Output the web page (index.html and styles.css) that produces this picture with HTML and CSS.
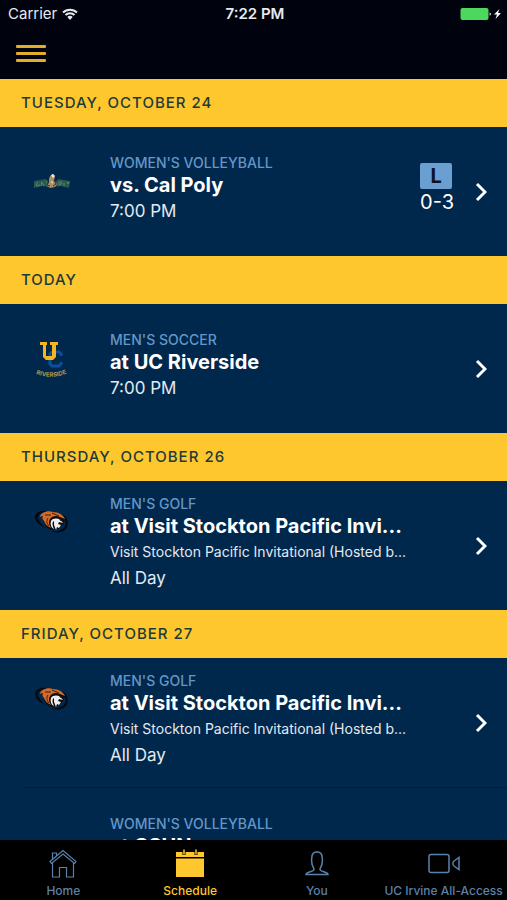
FILE: index.html
```html
<!DOCTYPE html>
<html lang="en">
<head>
<meta charset="utf-8">
<meta name="viewport" content="width=device-width, initial-scale=1">
<title>Schedule</title>
<link rel="stylesheet" href="styles.css">
</head>
<body>
<svg class="defs" aria-hidden="true">
  <symbol id="chevron" viewBox="0 0 12 20"><path d="M2 2l8 8-8 8" fill="none" stroke="#fff" stroke-width="3"/></symbol>
  <symbol id="tiger" viewBox="0 0 36 26">
    <path d="M14 2C6 1 1 4 1 8c0 5 6 9 12 12C8 16 4 12 4 8c0-3 4-5 10-6z" fill="#05080d"/>
    <path d="M28 5c5 3 7 8 5 13-2 5-9 7-16 4 7 1 12-1 14-5 2-4 0-8-3-12z" fill="#05080d"/>
    <path d="M8 6c3-3 7-4 11-3 6 0 10 3 12 8l-2 4-5 5-7 1C11 18 9 13 8 6z" fill="#0b0d10"/>
    <path d="M9 4c3-2 7-2 10-1 6 0 10 3 12 7l-5-2c-4-2-8-1-10 2-2 3-1 6 1 9-4-2-6-4-7-7-2-2-2-4-1-5-1 0-2 0-3 1 0-2 1-3 3-4z" fill="#d56a28"/>
    <path d="M11 6l6 0M18 4l7 3M14 9c-2 3-1 6 1 8" fill="none" stroke="#3a2014"/>
    <path d="M17 12c2-3 6-3 10-1l2 3-4-1-1 2 3 1-2 3-2-1-1 3-2-5 0-4c-2 1-2 4 0 8-3-1-4-5-3-8z" fill="#f0eeec"/>
    <path d="M25 9l4 2-2 1z" fill="none" stroke="#111"/>
  </symbol>
</svg>

<header class="top">
  <div class="status">
    <div class="carrier">Carrier
      <svg class="wifi" viewBox="0 0 16 12" aria-hidden="true"><g fill="none" stroke="#e8e9ee" stroke-width="2"><path d="M1 4.500a10 10 0 0 1 14 0M3.500 7a6.400 6.400 0 0 1 9 0"/></g><path d="M5.300 9a4 4 0 0 1 5.400 0L8 12z" fill="#e8e9ee"/></svg>
    </div>
    <div class="clock">7:22 PM</div>
    <div class="power">
      <svg class="battery" viewBox="0 0 42 14" aria-label="Battery charging"><rect x="0.500" y="1" width="28" height="12" rx="2" fill="#4cd75f"/><path d="M29.500 5.500q1.500 0 1.500 1.500t-1.500 1.500z" fill="#c8d8d0"/><path d="M39.500 2l-5.500 5.500h3L35.500 12l5.500-6h-3z" fill="#fff"/></svg>
    </div>
  </div>
  <button class="menu" type="button" aria-label="Menu"><span></span><span></span><span></span></button>
</header>

<main class="schedule">
  <section>
    <h2 class="date">TUESDAY, OCTOBER 24</h2>
    <a class="game" href="#cal-poly">
      <svg class="logo" viewBox="0 -2 40 40" aria-hidden="true">
        <path d="M2 17l12-2 3 4 6 0 3-4 12 2-1 7-8-2-10 1-9-1-8 2z" fill="#28594f"/>
        <path d="M6 18l-2 2 1 2 3-1M9 22l1-4 2 4M15 17v4l2 0M27 18v4M27 18q3-1 3 1t-3 1M32 19v3M35 18l1 2 1-2" fill="none" stroke="#64816a"/>
        <path d="M18 12l3-2 2 3-1 3 3 4-2 3-5 1-3-2 2-3 0-4z" fill="#a98e69"/>
        <path d="M19 11l2-1 2 2-2 2zM19 17l2 1-1 2z" fill="#f1ead3"/>
        <path d="M16 18l-1 3 3 1M22 16l2 4-3 2" fill="none" stroke="#352f29"/>
      </svg>
      <div class="info">
        <span class="sport">WOMEN'S VOLLEYBALL</span>
        <strong class="title">vs. Cal Poly</strong>
        <span class="time">7:00 PM</span>
      </div>
      <div class="score"><b class="result">L</b><span>0-3</span></div>
      <svg class="chevron" aria-hidden="true"><use href="#chevron"/></svg>
    </a>
  </section>

  <section>
    <h2 class="date">TODAY</h2>
    <a class="game" href="#uc-riverside">
      <svg class="logo" viewBox="0 0 40 40" aria-hidden="true">
        <path d="M29 17v-2l-2-2h-7l-2 2v10l2 2h7l2-2v-2" fill="none" stroke="#0d4e9b" stroke-width="3"/>
        <path d="M8 3h7v3h-1v11h6V6h-2V3h8v3h-2v12l-3 3h-7l-3-3V6H8z" fill="#f3b522"/>
        <path id="arc" d="M4 35q16 6 32-1" fill="none"/>
        <text class="riverside"><textPath href="#arc">RIVERSIDE</textPath></text>
      </svg>
      <div class="info">
        <span class="sport">MEN'S SOCCER</span>
        <strong class="title">at UC Riverside</strong>
        <span class="time">7:00 PM</span>
      </div>
      <svg class="chevron" aria-hidden="true"><use href="#chevron"/></svg>
    </a>
  </section>

  <section>
    <h2 class="date">THURSDAY, OCTOBER 26</h2>
    <a class="game" href="#golf-26">
      <svg class="logo tiger" aria-hidden="true"><use href="#tiger"/></svg>
      <div class="info">
        <span class="sport">MEN'S GOLF</span>
        <strong class="title">at Visit Stockton Pacific Invi...</strong>
        <span class="event">Visit Stockton Pacific Invitational (Hosted b...</span>
        <span class="time">All Day</span>
      </div>
      <svg class="chevron" aria-hidden="true"><use href="#chevron"/></svg>
    </a>
  </section>

  <section>
    <h2 class="date">FRIDAY, OCTOBER 27</h2>
    <a class="game" href="#golf-27">
      <svg class="logo tiger" aria-hidden="true"><use href="#tiger"/></svg>
      <div class="info">
        <span class="sport">MEN'S GOLF</span>
        <strong class="title">at Visit Stockton Pacific Invi...</strong>
        <span class="event">Visit Stockton Pacific Invitational (Hosted b...</span>
        <span class="time">All Day</span>
      </div>
      <svg class="chevron" aria-hidden="true"><use href="#chevron"/></svg>
    </a>
    <hr class="rule">
    <a class="game" href="#csun">
      <span class="logo"></span>
      <div class="info">
        <span class="sport">WOMEN'S VOLLEYBALL</span>
        <strong class="title">at CSUN</strong>
        <span class="time">7:00 PM</span>
      </div>
      <svg class="chevron" aria-hidden="true"><use href="#chevron"/></svg>
    </a>
  </section>
</main>

<nav class="tabs">
  <a class="tab" href="#home">
    <svg class="icon" viewBox="0 0 32 32" aria-hidden="true"><path d="M3 13.500L16 2.500l13 11-1.500 2L16 6 4.500 15.500zM5.500 15v14h7V19.500h7V29h7V15M5.500 11V5h4v3" fill="none" stroke="currentColor" stroke-width="1.200"/></svg>
    <span>Home</span>
  </a>
  <a class="tab active" href="#schedule" aria-current="page">
    <svg class="icon" viewBox="0 0 32 32" aria-hidden="true"><path d="M2 4h28v5H2zM2 10.500h28V29H2z" fill="currentColor"/><path d="M10 2v5M22 2v5" stroke="#000" stroke-width="3"/><path d="M10 1.500v5M22 1.500v5" stroke="currentColor" stroke-width="1.500"/></svg>
    <span>Schedule</span>
  </a>
  <a class="tab" href="#you">
    <svg class="icon" viewBox="0 0 32 32" aria-hidden="true"><path d="M5 26.500c0-3 8-2.500 8-5 0-2-1.500-3-2-5.500-.5-3-.5-6 0-8 .5-3 2.500-4 5-4s4.500 1 5 4c.5 2 .5 5 0 8-.5 2.500-2 3.500-2 5.500 0 2.500 8 2 8 5z" fill="none" stroke="currentColor" stroke-width="1.500"/></svg>
    <span>You</span>
  </a>
  <a class="tab" href="#all-access">
    <svg class="icon" viewBox="0 0 32 32" aria-hidden="true"><rect x="1" y="6.500" width="20" height="18" rx="2" fill="none" stroke="currentColor" stroke-width="1.500"/><path d="M31 9.500v12l-5-3.500c-1.500-1-1.500-4 0-5z" fill="none" stroke="currentColor" stroke-width="1.500"/></svg>
    <span>UC Irvine All-Access</span>
  </a>
</nav>
</body>
</html>
```

FILE: styles.css
```css
* { box-sizing: border-box; }

body {
  margin: 0;
  height: 100vh;
  display: flex;
  flex-direction: column;
  overflow: hidden;
  background: #00284c;
  color: #fff;
  font-family: Inter, Roboto, sans-serif;
}

a { color: inherit; text-decoration: none; }

.defs { display: none; }

.top {
  flex: none;
  padding-bottom: 8px;
  background: #00030d;
}

.status {
  display: grid;
  grid-template-columns: 1fr auto 1fr;
  align-items: center;
  height: 27px;
  padding: 0 5px 0 8px;
  font-size: 15px;
  color: #e8e9ee;
}

.carrier { display: flex; align-items: center; gap: 5px; }
.wifi { width: 16px; height: 12px; }
.clock { font-weight: 600; }
.power { display: flex; justify-content: flex-end; }
.battery { width: 42px; height: 14px; }

.menu {
  display: flex;
  flex-direction: column;
  justify-content: center;
  gap: 4px;
  width: 62px;
  height: 44px;
  padding: 8px 16px 0;
  border: 0;
  background: none;
}
.menu span { height: 3px; border-radius: 1px; background: #e3ac29; }

.schedule {
  flex: 1;
  min-height: 0;
  overflow-y: auto;
  scrollbar-width: none;
}

.date {
  margin: 0;
  padding: 0 21px;
  background: #ffc72e;
  color: #1d3a3c;
  font-size: 15px;
  font-weight: 500;
  line-height: 48px;
  letter-spacing: 1px;
}

.game {
  display: flex;
  align-items: center;
  height: 129px;
  padding: 0 20px 0 32px;
}

.logo { flex: none; width: 40px; height: 40px; margin: 0 38px 20px 0; }
.tiger { height: 26px; margin-bottom: 48px; }
.riverside { fill: #b3984a; font-size: 6px; font-weight: 700; }

.info {
  flex: 1;
  min-width: 0;
  display: flex;
  flex-direction: column;
  padding-bottom: 6px;
  white-space: nowrap;
}

.sport {
  color: #6496c8;
  font-size: 14px;
  font-weight: 500;
  line-height: 18px;
}
.title { font-size: 20px; font-weight: 700; line-height: 26px; }
.event { font-size: 14px; line-height: 26px; color: #e3eaf2; }
.time { font-size: 17px; line-height: 26px; color: #e3eaf2; }

.score {
  display: flex;
  flex-direction: column;
  margin-right: 21px;
  padding-bottom: 6px;
  font-size: 20px;
  line-height: 26px;
}
.result {
  width: 32px;
  border-radius: 2px;
  background: #6b9fd2;
  color: #0a1522;
  text-align: center;
}

.chevron { flex: none; width: 12px; height: 20px; }

.rule { margin: 0 0 0 24px; border: 0; border-top: 1px solid #001d3d; }

.tabs {
  flex: none;
  display: grid;
  grid-template-columns: repeat(4, 1fr);
  height: 60px;
  padding-top: 8px;
  background: #000;
  color: #5b82aa;
}
.tab {
  display: flex;
  flex-direction: column;
  align-items: center;
  font-size: 12px;
  font-weight: 500;
  line-height: 22px;
  white-space: nowrap;
}
.active { color: #ffc72e; }
.icon { width: 32px; height: 32px; }
```
